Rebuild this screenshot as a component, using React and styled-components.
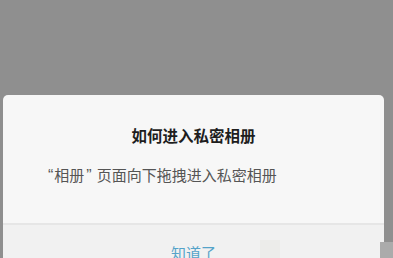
import styled, { createGlobalStyle } from "styled-components";

const GlobalStyle = createGlobalStyle`
  * {
    box-sizing: border-box;
    margin: 0;
    padding: 0;
  }

  html, body {
    width: 393px;
    height: 258px;
    overflow: hidden;
  }

  body {
    background-color: #8f8f8f;
    font-family: "Noto Sans CJK SC", "Noto Sans", sans-serif;
  }
`;

function App() {
  return (
    <>
      <GlobalStyle />
      <Screen>
        <Dialog>
          <Title>如何进入私密相册</Title>
          <Message>
            <Quote>“</Quote>相册<Quote $close>”</Quote>页面向下拖拽进入私密相册
          </Message>
          <Footer>
            <ActionButton>知道了</ActionButton>
            <Ghost />
          </Footer>
        </Dialog>
        <EdgeTab />
      </Screen>
    </>
  );
}

const Screen = styled.main`
  position: relative;
  height: 258px;
  padding-top: 95px;
  padding-left: 3px;
`;

const Dialog = styled.section`
  width: 381px;
  background-color: #f7f7f7;
  border-radius: 5px 5px 0 0;
  display: flex;
  flex-direction: column;
`;

const Title = styled.h1`
  padding-top: 29px;
  font-size: 15.5px;
  line-height: 22px;
  font-weight: 700;
  color: #1e1e1e;
  text-align: center;
`;

const Message = styled.p`
  padding: 18px 0 37px 45px;
  font-size: 15px;
  line-height: 21px;
  color: #555;
`;

const Quote = styled.span`
  font-family: "Liberation Sans", sans-serif;
  font-size: 16px;
  padding: ${(p) => (p.$close ? "0 5px 0 2px" : "0 1px 0 0")};
`;

const Footer = styled.div`
  position: relative;
  border-top: 2px solid #e6e6e6;
  background-color: #f1f1f1;
  padding-top: 17px;
  height: 60px;
  display: flex;
  justify-content: center;
`;

const ActionButton = styled.button`
  border: none;
  background: none;
  font-family: inherit;
  font-size: 15px;
  line-height: 22px;
  height: 22px;
  color: #55a3c9;
`;

const Ghost = styled.span`
  position: absolute;
  left: 257px;
  top: 15px;
  width: 20px;
  height: 30px;
  background-color: #ececea;
`;

const EdgeTab = styled.div`
  position: absolute;
  right: 0;
  top: 242px;
  width: 13px;
  height: 20px;
  background-color: #ababab;
`;

export default App;
